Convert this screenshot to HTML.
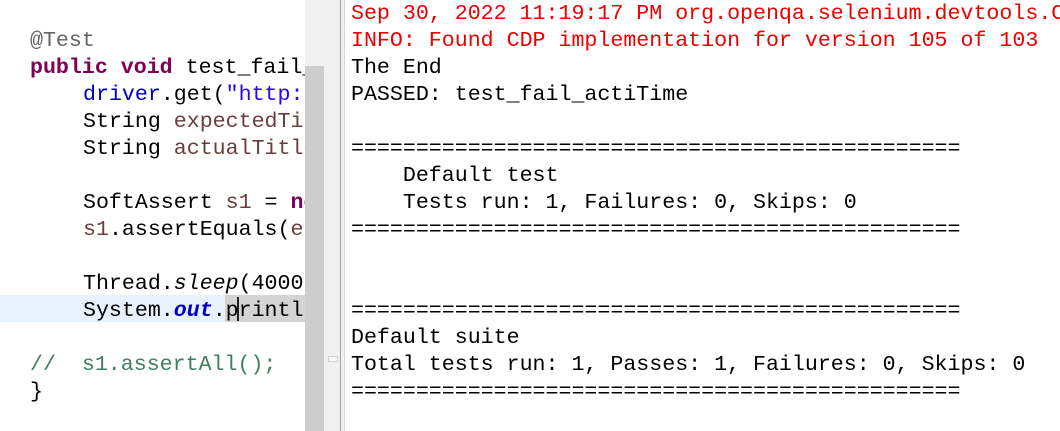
<!DOCTYPE html>
<html><head><meta charset="utf-8"><style>
*{margin:0;padding:0}
html,body{width:1060px;height:431px;overflow:hidden}
body{background:#fff;position:relative;font-family:"Liberation Mono",monospace;font-size:21.62px}
.l{position:absolute;white-space:pre;line-height:27px;height:27px}
#ed{position:absolute;left:0;top:0;width:305px;height:431px;overflow:hidden}
#co{position:absolute;left:345px;top:0;width:715px;height:431px;overflow:hidden}
.k{color:#7f0055;font-weight:bold}
.f{color:#0000c0}
.s{color:#2a00ff}
.v{color:#6a3e3e}
.c{color:#3f7f5f}
.a{color:#646464}
.r{color:#e00}
</style></head><body>
<div id="ed">
<div style="position:absolute;left:0;top:295px;width:305px;height:27px;background:#e8f2fe"></div>
<div style="position:absolute;left:225px;top:295px;width:80px;height:27px;background:#d4d4d4"></div>
<div style="position:absolute;left:237px;top:297px;width:2px;height:24px;background:#222"></div>
<div class="l a" style="left:30px;top:28px">@Test</div>
<div class="l" style="left:30px;top:55px"><span class="k">public</span> <span class="k">void</span> test_fail_actiTime</div>
<div class="l" style="left:83px;top:82px"><span class="f">driver</span>.get(<span class="s">"http://</span></div>
<div class="l" style="left:83px;top:109px">String <span class="v">expectedTitle</span></div>
<div class="l" style="left:83px;top:136px">String <span class="v">actualTitle</span></div>
<div class="l" style="left:83px;top:190px">SoftAssert <span class="v">s1</span> = <span class="k">new</span></div>
<div class="l" style="left:83px;top:217px"><span class="v">s1</span>.assertEquals(<span class="v">e</span></div>
<div class="l" style="left:83px;top:271px">Thread.<i>sleep</i>(4000)</div>
<div class="l" style="left:83px;top:298px">System.<i class="f" style="font-weight:bold">out</i>.println</div>
<div class="l c" style="left:30px;top:352px">//  s1.assertAll();</div>
<div class="l" style="left:30px;top:379px">}</div>
</div>
<div style="position:absolute;left:305px;top:0;width:35px;height:431px;background:#f0f0f0"></div>
<div style="position:absolute;left:305px;top:66px;width:19px;height:365px;background:#cdcdcd"></div>
<div style="position:absolute;left:328px;top:356px;width:8px;height:4px;border:1px solid #d0d0d0;background:#f8f8f8"></div>
<div style="position:absolute;left:340px;top:0;width:1px;height:431px;background:#a0a0a0"></div>
<div style="position:absolute;left:341px;top:0;width:3px;height:431px;background:#f0f0f0"></div>
<div style="position:absolute;left:344px;top:0;width:1px;height:431px;background:#d8d8d8"></div>
<div id="co">
<div class="l r" style="left:6px;top:1px">Sep 30, 2022 11:19:17 PM org.openqa.selenium.devtools.CdpVersionFinder</div>
<div class="l r" style="left:6px;top:28px">INFO: Found CDP implementation for version 105 of 103</div>
<div class="l" style="left:6px;top:55px">The End</div>
<div class="l" style="left:6px;top:82px">PASSED: test_fail_actiTime</div>
<div class="l" style="left:6px;top:136px">===============================================</div>
<div class="l" style="left:6px;top:163px">    Default test</div>
<div class="l" style="left:6px;top:190px">    Tests run: 1, Failures: 0, Skips: 0</div>
<div class="l" style="left:6px;top:217px">===============================================</div>
<div class="l" style="left:6px;top:298px">===============================================</div>
<div class="l" style="left:6px;top:325px">Default suite</div>
<div class="l" style="left:6px;top:352px">Total tests run: 1, Passes: 1, Failures: 0, Skips: 0</div>
<div class="l" style="left:6px;top:379px">===============================================</div>
</div>
</body></html>
